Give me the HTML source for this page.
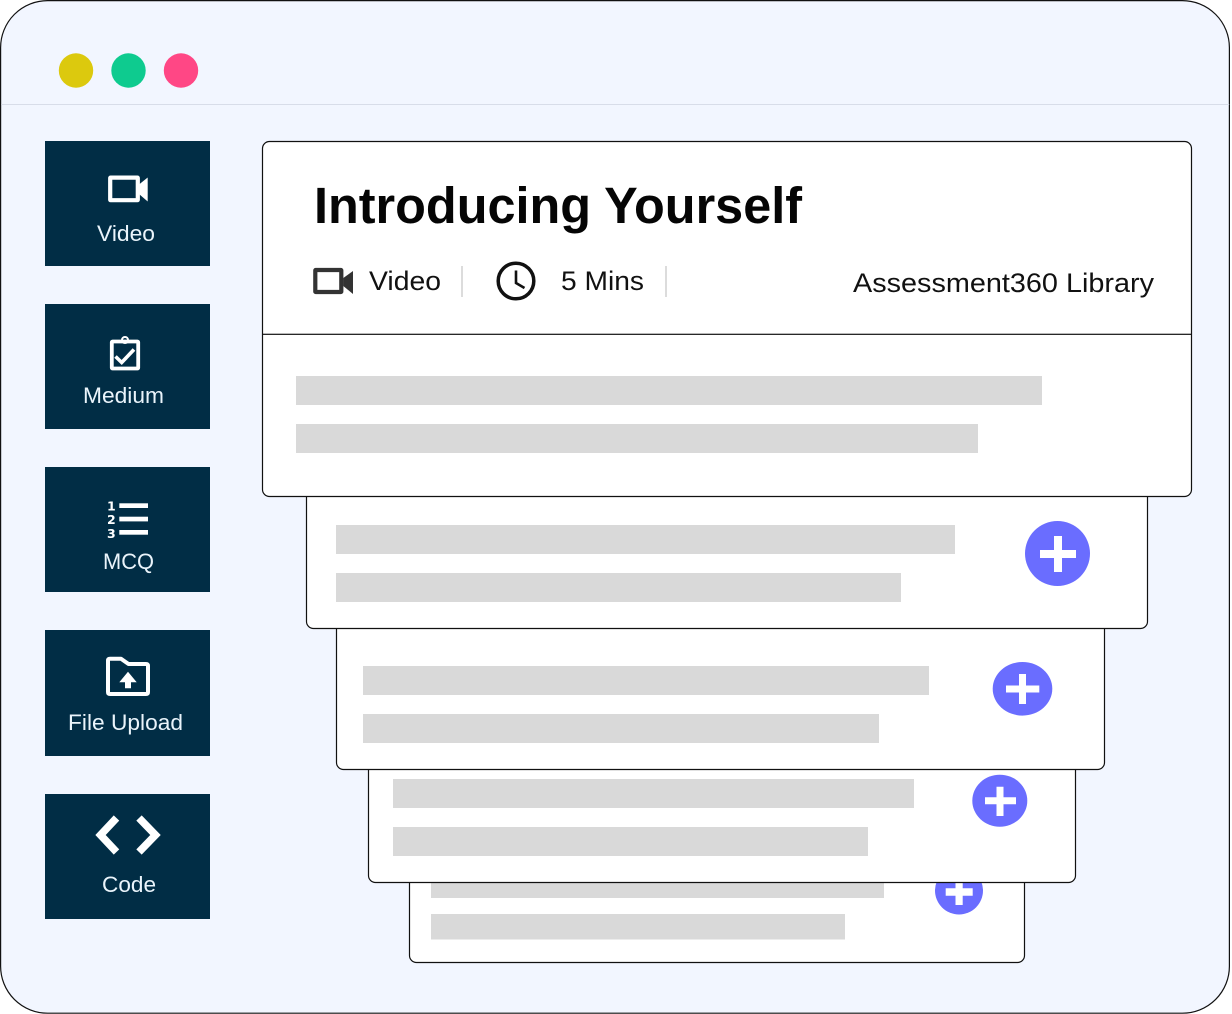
<!DOCTYPE html>
<html lang="en">
<head>
<meta charset="utf-8">
<title>Introducing Yourself</title>
<style>
html,body{margin:0;padding:0;background:#fff;width:1232px;height:1014px;overflow:hidden}
svg{display:block}
text{font-family:"Liberation Sans",sans-serif}
.t{fill:#eaf4fb;font-size:22px}
.d{fill:#111;font-size:27px}
.n{fill:#fff;font-family:"DejaVu Sans",sans-serif;font-size:12.5px;font-weight:700}
</style>
</head>
<body>
<svg width="1232" height="1014" viewBox="0 0 1232 1014" xmlns="http://www.w3.org/2000/svg">
  <!-- window -->
  <rect x="0.6" y="0.6" width="1228.8" height="1012.6" rx="47" fill="#f2f6ff" stroke="#111" stroke-width="1.2"/>
  <rect x="1.2" y="104" width="1228" height="1" fill="#d8dde9"/>
  <circle cx="76" cy="70.5" r="17.2" fill="#dcc90e"/>
  <circle cx="128.5" cy="70.5" r="17.2" fill="#0ecb8f"/>
  <circle cx="181" cy="70.5" r="17.2" fill="#ff4785"/>

  <!-- tiles -->
  <g fill="#012d45">
    <rect x="45" y="141" width="165" height="125"/>
    <rect x="45" y="304" width="165" height="125"/>
    <rect x="45" y="467" width="165" height="125"/>
    <rect x="45" y="630" width="165" height="126"/>
    <rect x="45" y="794" width="165" height="125"/>
  </g>

  <!-- video tile -->
  <rect x="110.2" y="177.6" width="27.6" height="22.6" rx="0.4" fill="none" stroke="#fff" stroke-width="4.2"/>
  <path d="M139 184.5 147.7 177.5V201.5L139 194Z" fill="#fff"/>
  <text class="t" x="97" y="241" textLength="58" lengthAdjust="spacingAndGlyphs">Video</text>

  <!-- medium tile -->
  <rect x="111.8" y="341.5" width="26.4" height="27" rx="0.8" fill="none" stroke="#fff" stroke-width="3.8"/>
  <circle cx="125" cy="340" r="3" fill="none" stroke="#fff" stroke-width="2"/>
  <path d="M115.5 356.5 121.7 362.5 134 349.5" fill="none" stroke="#fff" stroke-width="3.6"/>
  <text class="t" x="83" y="403" textLength="81" lengthAdjust="spacingAndGlyphs">Medium</text>

  <!-- mcq tile -->
  <rect x="119.3" y="503.3" width="28.7" height="4.7" fill="#fff"/>
  <rect x="119.3" y="516.7" width="28.7" height="4.7" fill="#fff"/>
  <rect x="119.3" y="530" width="28.7" height="4.7" fill="#fff"/>
  <text class="n" x="107" y="510.5">1</text>
  <text class="n" x="107" y="524">2</text>
  <text class="n" x="107" y="538">3</text>
  <text class="t" x="103" y="569" textLength="51" lengthAdjust="spacingAndGlyphs">MCQ</text>

  <!-- file upload tile -->
  <path d="M108 660.5Q108 658.7 110 658.7H121L128.5 664H146Q148 664 148 666V692Q148 694 146 694H110Q108 694 108 692Z" fill="none" stroke="#fff" stroke-width="4" stroke-linejoin="round"/>
  <path d="M128 671.7 136.7 682.3H131V688.3H125V682.3H119.3Z" fill="#fff"/>
  <text class="t" x="68" y="730" textLength="115" lengthAdjust="spacingAndGlyphs">File Upload</text>

  <!-- code tile -->
  <path d="M116.5 818 100.5 835 116.5 852M139 818 155.5 835 139 852" fill="none" stroke="#fff" stroke-width="7.5"/>
  <text class="t" x="102" y="892" textLength="54" lengthAdjust="spacingAndGlyphs">Code</text>

  <!-- stacked cards, back to front -->
  <rect x="409.5" y="860" width="615" height="102.5" rx="7" fill="#fff" stroke="#111" stroke-width="1.2"/>
  <g fill="#d9d9d9">
    <rect x="431" y="870" width="453" height="28"/>
    <rect x="431" y="914" width="414" height="25.5"/>
  </g>
  <circle cx="959" cy="890.5" r="24" fill="#6a6dff"/>
  <path d="M945.7 888.3H972.7V895.7H945.7ZM955.5 870H962.7V905H955.5Z" fill="#fff"/>

  <rect x="368.5" y="740" width="707" height="142.5" rx="7" fill="#fff" stroke="#111" stroke-width="1.2"/>
  <g fill="#d9d9d9">
    <rect x="393" y="779" width="521" height="29"/>
    <rect x="393" y="827" width="475" height="29"/>
  </g>
  <ellipse cx="999.8" cy="800.7" rx="27.5" ry="26" fill="#6a6dff"/>
  <path d="M985 797.2H1016V804.2H985ZM996.5 786.7H1003.5V816H996.5Z" fill="#fff"/>

  <rect x="336.5" y="600" width="768" height="169.5" rx="7" fill="#fff" stroke="#111" stroke-width="1.2"/>
  <g fill="#d9d9d9">
    <rect x="363" y="666" width="566" height="29"/>
    <rect x="363" y="714" width="516" height="29"/>
  </g>
  <ellipse cx="1022.5" cy="688.8" rx="29.8" ry="26.8" fill="#6a6dff"/>
  <path d="M1006 685.5H1039.3V692.5H1006ZM1019 674H1026V704H1019Z" fill="#fff"/>

  <rect x="306.5" y="470" width="841" height="158.5" rx="7" fill="#fff" stroke="#111" stroke-width="1.2"/>
  <g fill="#d9d9d9">
    <rect x="336" y="525" width="619" height="29"/>
    <rect x="336" y="573" width="565" height="29"/>
  </g>
  <circle cx="1057.5" cy="553.5" r="32.5" fill="#6a6dff"/>
  <path d="M1040 550H1076V558H1040ZM1054 536H1062V572H1054Z" fill="#fff"/>

  <!-- main card -->
  <rect x="262.5" y="141.5" width="929" height="355" rx="7" fill="#fff" stroke="#111" stroke-width="1.2"/>
  <rect x="263" y="333.7" width="928" height="1.2" fill="#111"/>
  <g fill="#d9d9d9">
    <rect x="296" y="376" width="746" height="29"/>
    <rect x="296" y="424" width="682" height="29"/>
  </g>

  <text x="314" y="223" font-size="51" font-weight="700" fill="#050505" textLength="488" lengthAdjust="spacingAndGlyphs">Introducing Yourself</text>

  <rect x="315.3" y="270" width="26" height="22" rx="0.4" fill="none" stroke="#333" stroke-width="4.2"/>
  <path d="M343.3 278 353 271V294L343.3 286Z" fill="#333"/>
  <text class="d" x="369" y="290" textLength="72" lengthAdjust="spacingAndGlyphs">Video</text>
  <rect x="461" y="266" width="2" height="31" fill="#dcdcdc"/>

  <circle cx="516" cy="281" r="17.8" fill="none" stroke="#111" stroke-width="3.5"/>
  <path d="M516 270.5V283L524.5 288" fill="none" stroke="#111" stroke-width="2.6"/>
  <text class="d" x="561" y="290" textLength="83" lengthAdjust="spacingAndGlyphs">5 Mins</text>
  <rect x="665" y="266" width="2" height="31" fill="#dcdcdc"/>

  <text class="d" x="853" y="292" textLength="301" lengthAdjust="spacingAndGlyphs">Assessment360 Library</text>
</svg>
</body>
</html>
